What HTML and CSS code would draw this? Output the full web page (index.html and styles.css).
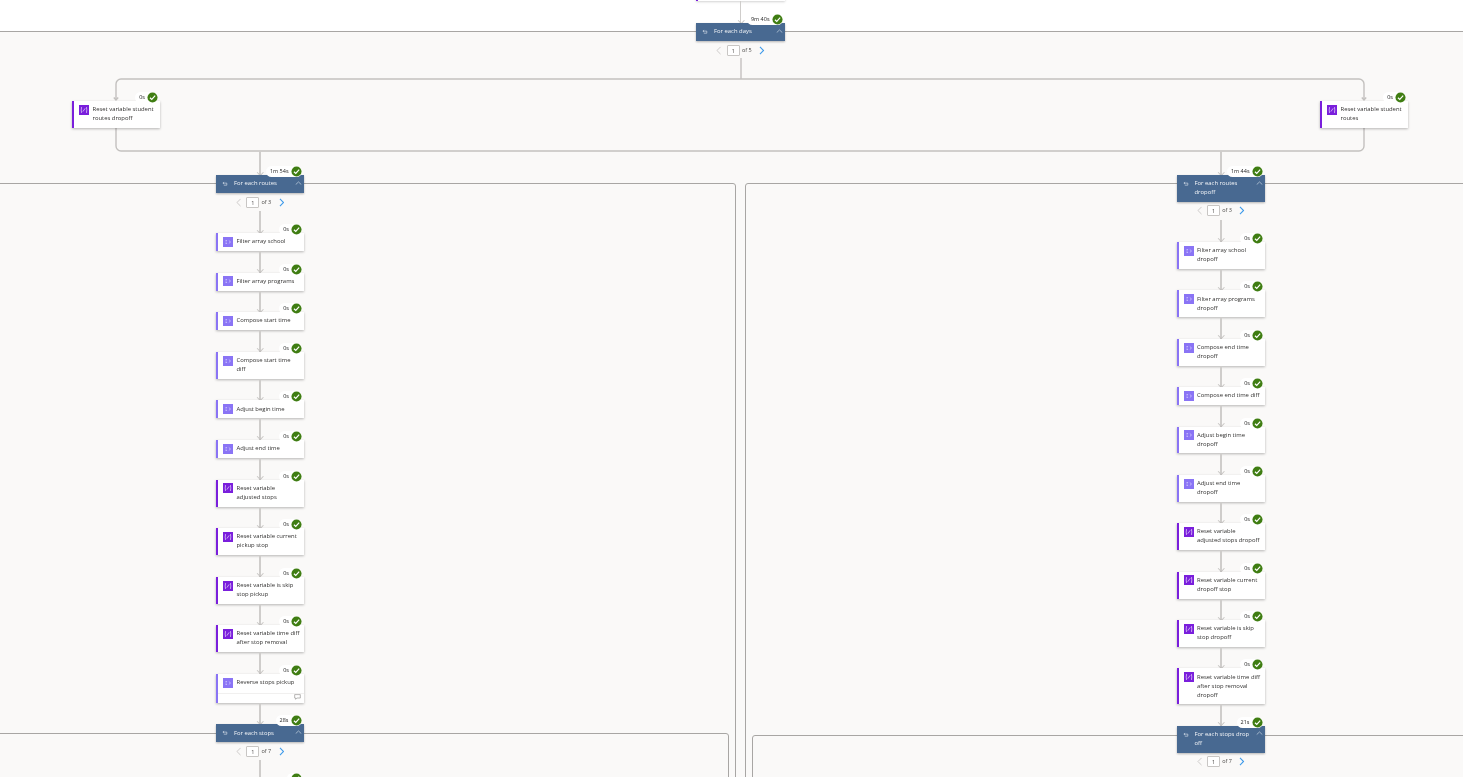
FILE: index.html
```html
<!DOCTYPE html>
<html lang="en">
<head>
<meta charset="utf-8">
<title>Flow run</title>
<link rel="stylesheet" href="styles.css">
</head>
<body>
<svg class="defs" width="0" height="0" aria-hidden="true">
  <symbol id="i-var" viewBox="0 0 10 10"><path d="M3 2.500H2.400v2l-.6.5.6.5v2H3M7 2.500h.6v2l.6.5-.6.5v2H7M3.900 6.600 6.100 3.400" fill="none" stroke="#fff" stroke-width=".6"/></symbol>
  <symbol id="i-data" viewBox="0 0 10 10"><path d="M2.500 3.500h1.600M2.500 5h1.200M2.500 6.500h1.600M5.800 3.500l1.700 1.500-1.700 1.500" fill="none" stroke="#e6e0ff" stroke-width=".6"/></symbol>
  <symbol id="i-loop" viewBox="0 0 10 10"><path d="M1.500 3.500h6.500v3.500H3M3.500 1.800 1.500 3.500l2 1.700" fill="none" stroke="#dfe6ee" stroke-width="1"/></symbol>
  <symbol id="i-ok" viewBox="0 0 12 12"><circle cx="6" cy="6" r="5.500" fill="#3f7d12"/><path d="M3.200 6.200 5.200 8 8.900 4" fill="none" stroke="#fff" stroke-width="1.300"/></symbol>
  <symbol id="i-up" viewBox="0 0 8 5"><path d="M.8 4 4 1l3.200 3" fill="none" stroke="#c9d5e3" stroke-width=".8"/></symbol>
  <symbol id="i-l" viewBox="0 0 6 10"><path d="M5 1 1 5l4 4" fill="none" stroke="#c8c6c4" stroke-width="1"/></symbol>
  <symbol id="i-r" viewBox="0 0 6 10"><path d="M1 1l4 4-4 4" fill="none" stroke="#3f9bea" stroke-width="1.200"/></symbol>
  <symbol id="i-note" viewBox="0 0 8 7"><path d="M.7.7h6.600v4H3.200L1.800 6.200V4.700H.7z" fill="none" stroke="#8a8886" stroke-width=".7"/></symbol>
</svg>

<main class="canvas">
  <div class="zone zone-outer"></div>
  <div class="zone zone-left"></div>
  <div class="zone zone-right"></div>
  <div class="zone zone-left-inner"></div>
  <div class="zone zone-right-inner"></div>

  <svg class="wires" width="1463" height="777" aria-hidden="true">
    <path d="M741 58V79"/>
    <path d="M1359 79H121a5 5 0 0 0-5 5V100"/>
    <path d="M1359 79a5 5 0 0 1 5 5V100"/>
    <path d="M116 128V146a5 5 0 0 0 5 5H1359a5 5 0 0 0 5-5V128"/>
    <path d="M113.800 97.500 116 100l2.200-2.500M1361.800 97.500 1364 100l2.200-2.500"/>
  </svg>

  <section class="col col-top">
    <div class="card card-var stub"></div>
    <div class="wire wire-22"></div>
    <div class="loop">
      <svg class="loop-ico"><use href="#i-loop"/></svg><span class="loop-text">For each days</span>
      <svg class="loop-up"><use href="#i-up"/></svg>
      <div class="badge badge-loop"><span>9m 40s</span><svg><use href="#i-ok"/></svg></div>
    </div>
    <div class="pager"><svg class="pg-l"><use href="#i-l"/></svg><span class="pg-box">1</span><span class="pg-of">of 5</span><svg class="pg-r"><use href="#i-r"/></svg></div>
  </section>

  <div class="card card-var branch-a">
    <svg class="ico ico-var"><use href="#i-var"/></svg><span class="label">Reset variable student routes dropoff</span>
    <div class="badge"><span>0s</span><svg><use href="#i-ok"/></svg></div>
  </div>
  <div class="card card-var branch-b">
    <svg class="ico ico-var"><use href="#i-var"/></svg><span class="label">Reset variable student routes</span>
    <div class="badge"><span>0s</span><svg><use href="#i-ok"/></svg></div>
  </div>

  <section class="col col-left">
    <div class="wire wire-24"></div>
    <div class="loop">
      <svg class="loop-ico"><use href="#i-loop"/></svg><span class="loop-text">For each routes</span>
      <svg class="loop-up"><use href="#i-up"/></svg>
      <div class="badge badge-loop"><span>1m 54s</span><svg><use href="#i-ok"/></svg></div>
    </div>
    <div class="pager"><svg class="pg-l"><use href="#i-l"/></svg><span class="pg-box">1</span><span class="pg-of">of 3</span><svg class="pg-r"><use href="#i-r"/></svg></div>
    <div class="wire wire-22"></div>
    <div class="card card-data"><svg class="ico ico-data"><use href="#i-data"/></svg><span class="label">Filter array school</span><div class="badge"><span>0s</span><svg><use href="#i-ok"/></svg></div></div>
    <div class="wire"></div>
    <div class="card card-data"><svg class="ico ico-data"><use href="#i-data"/></svg><span class="label">Filter array programs</span><div class="badge"><span>0s</span><svg><use href="#i-ok"/></svg></div></div>
    <div class="wire"></div>
    <div class="card card-data"><svg class="ico ico-data"><use href="#i-data"/></svg><span class="label">Compose start time</span><div class="badge"><span>0s</span><svg><use href="#i-ok"/></svg></div></div>
    <div class="wire"></div>
    <div class="card card-data"><svg class="ico ico-data"><use href="#i-data"/></svg><span class="label">Compose start time<br>diff</span><div class="badge"><span>0s</span><svg><use href="#i-ok"/></svg></div></div>
    <div class="wire"></div>
    <div class="card card-data"><svg class="ico ico-data"><use href="#i-data"/></svg><span class="label">Adjust begin time</span><div class="badge"><span>0s</span><svg><use href="#i-ok"/></svg></div></div>
    <div class="wire"></div>
    <div class="card card-data"><svg class="ico ico-data"><use href="#i-data"/></svg><span class="label">Adjust end time</span><div class="badge"><span>0s</span><svg><use href="#i-ok"/></svg></div></div>
    <div class="wire"></div>
    <div class="card card-var"><svg class="ico ico-var"><use href="#i-var"/></svg><span class="label">Reset variable<br>adjusted stops</span><div class="badge"><span>0s</span><svg><use href="#i-ok"/></svg></div></div>
    <div class="wire"></div>
    <div class="card card-var"><svg class="ico ico-var"><use href="#i-var"/></svg><span class="label">Reset variable current<br>pickup stop</span><div class="badge"><span>0s</span><svg><use href="#i-ok"/></svg></div></div>
    <div class="wire"></div>
    <div class="card card-var"><svg class="ico ico-var"><use href="#i-var"/></svg><span class="label">Reset variable is skip<br>stop pickup</span><div class="badge"><span>0s</span><svg><use href="#i-ok"/></svg></div></div>
    <div class="wire"></div>
    <div class="card card-var"><svg class="ico ico-var"><use href="#i-var"/></svg><span class="label">Reset variable time diff<br>after stop removal</span><div class="badge"><span>0s</span><svg><use href="#i-ok"/></svg></div></div>
    <div class="wire"></div>
    <div class="card card-data card-note"><svg class="ico ico-data"><use href="#i-data"/></svg><span class="label">Reverse stops pickup</span><svg class="note"><use href="#i-note"/></svg><div class="badge"><span>0s</span><svg><use href="#i-ok"/></svg></div></div>
    <div class="wire"></div>
    <div class="loop">
      <svg class="loop-ico"><use href="#i-loop"/></svg><span class="loop-text">For each stops</span>
      <svg class="loop-up"><use href="#i-up"/></svg>
      <div class="badge badge-loop"><span>28s</span><svg><use href="#i-ok"/></svg></div>
    </div>
    <div class="pager"><svg class="pg-l"><use href="#i-l"/></svg><span class="pg-box">1</span><span class="pg-of">of 7</span><svg class="pg-r"><use href="#i-r"/></svg></div>
    <div class="wire wire-22"></div>
    <div class="card card-var"><div class="badge"><svg><use href="#i-ok"/></svg></div></div>
  </section>

  <section class="col col-right">
    <div class="wire wire-24"></div>
    <div class="loop">
      <svg class="loop-ico"><use href="#i-loop"/></svg><span class="loop-text">For each routes<br>dropoff</span>
      <svg class="loop-up"><use href="#i-up"/></svg>
      <div class="badge badge-loop"><span>1m 44s</span><svg><use href="#i-ok"/></svg></div>
    </div>
    <div class="pager"><svg class="pg-l"><use href="#i-l"/></svg><span class="pg-box">1</span><span class="pg-of">of 3</span><svg class="pg-r"><use href="#i-r"/></svg></div>
    <div class="wire wire-22"></div>
    <div class="card card-data"><svg class="ico ico-data"><use href="#i-data"/></svg><span class="label">Filter array school<br>dropoff</span><div class="badge"><span>0s</span><svg><use href="#i-ok"/></svg></div></div>
    <div class="wire"></div>
    <div class="card card-data"><svg class="ico ico-data"><use href="#i-data"/></svg><span class="label">Filter array programs<br>dropoff</span><div class="badge"><span>0s</span><svg><use href="#i-ok"/></svg></div></div>
    <div class="wire"></div>
    <div class="card card-data"><svg class="ico ico-data"><use href="#i-data"/></svg><span class="label">Compose end time<br>dropoff</span><div class="badge"><span>0s</span><svg><use href="#i-ok"/></svg></div></div>
    <div class="wire"></div>
    <div class="card card-data"><svg class="ico ico-data"><use href="#i-data"/></svg><span class="label">Compose end time diff</span><div class="badge"><span>0s</span><svg><use href="#i-ok"/></svg></div></div>
    <div class="wire"></div>
    <div class="card card-data"><svg class="ico ico-data"><use href="#i-data"/></svg><span class="label">Adjust begin time<br>dropoff</span><div class="badge"><span>0s</span><svg><use href="#i-ok"/></svg></div></div>
    <div class="wire"></div>
    <div class="card card-data"><svg class="ico ico-data"><use href="#i-data"/></svg><span class="label">Adjust end time<br>dropoff</span><div class="badge"><span>0s</span><svg><use href="#i-ok"/></svg></div></div>
    <div class="wire"></div>
    <div class="card card-var"><svg class="ico ico-var"><use href="#i-var"/></svg><span class="label">Reset variable<br>adjusted stops dropoff</span><div class="badge"><span>0s</span><svg><use href="#i-ok"/></svg></div></div>
    <div class="wire"></div>
    <div class="card card-var"><svg class="ico ico-var"><use href="#i-var"/></svg><span class="label">Reset variable current<br>dropoff stop</span><div class="badge"><span>0s</span><svg><use href="#i-ok"/></svg></div></div>
    <div class="wire"></div>
    <div class="card card-var"><svg class="ico ico-var"><use href="#i-var"/></svg><span class="label">Reset variable is skip<br>stop dropoff</span><div class="badge"><span>0s</span><svg><use href="#i-ok"/></svg></div></div>
    <div class="wire"></div>
    <div class="card card-var"><svg class="ico ico-var"><use href="#i-var"/></svg><span class="label">Reset variable time diff<br>after stop removal<br>dropoff</span><div class="badge"><span>0s</span><svg><use href="#i-ok"/></svg></div></div>
    <div class="wire"></div>
    <div class="loop">
      <svg class="loop-ico"><use href="#i-loop"/></svg><span class="loop-text">For each stops drop<br>off</span>
      <svg class="loop-up"><use href="#i-up"/></svg>
      <div class="badge badge-loop"><span>21s</span><svg><use href="#i-ok"/></svg></div>
    </div>
    <div class="pager"><svg class="pg-l"><use href="#i-l"/></svg><span class="pg-box">1</span><span class="pg-of">of 7</span><svg class="pg-r"><use href="#i-r"/></svg></div>
  </section>
</main>
</body>
</html>
```
FILE: styles.css
```css
* { box-sizing: border-box; }
html, body { margin: 0; padding: 0; background: #fff; overflow: hidden; }
.defs { position: absolute; }

.canvas {
  position: relative;
  width: 1463px;
  height: 777px;
  overflow: hidden;
  font-family: "Open Sans", "Liberation Sans", sans-serif;
  font-size: 5.900px;
  line-height: 9px;
  color: #323130;
  filter: blur(.25px);
  will-change: transform;
}

/* Scope containers */
.zone { position: absolute; background: #faf9f8; border: 1px solid #a8a6a4; }
.zone-outer { left: -10px; right: -10px; top: 31px; bottom: -10px; }
.zone-left { left: -10px; width: 746px; top: 183px; bottom: -10px; border-radius: 0 3px 0 0; }
.zone-right { left: 745px; right: -10px; top: 183px; bottom: -10px; border-radius: 3px 0 0 0; }
.zone-left-inner { left: -10px; width: 739px; top: 733px; bottom: -10px; border-radius: 0 3px 0 0; }
.zone-right-inner { left: 752px; right: -10px; top: 735px; bottom: -10px; border-radius: 3px 0 0 0; }

.wires { position: absolute; left: 0; top: 0; fill: none; stroke: #c3c1bf; stroke-width: 1.400; }

/* Columns of steps */
.col { position: absolute; display: flex; flex-direction: column; }
.col-top { left: 696px; top: 0; width: 89px; }
.col-left { left: 216px; top: 151px; width: 88px; }
.col-right { left: 1176.500px; top: 151px; width: 88.500px; }

.wire { position: relative; height: 21.500px; flex: none; }
.col-left .wire { height: 21.600px; }
.col-right .wire { height: 21.400px; }
.wire::before {
  content: "";
  position: absolute;
  left: 50%;
  top: 0;
  bottom: 0;
  width: 1.600px;
  margin-left: -.8px;
  background: #cfcdcb;
}
.wire::after {
  content: "";
  position: absolute;
  left: 50%;
  bottom: 1px;
  width: 3.500px;
  height: 3.500px;
  margin-left: -1.750px;
  border-right: 1px solid #c8c6c4;
  border-bottom: 1px solid #c8c6c4;
  transform: rotate(45deg);
}
.col .wire-22 { height: 22px; }
.col .wire-24 { height: 24px; }

/* Action cards */
.card {
  position: relative;
  flex: none;
  display: flex;
  align-items: flex-start;
  gap: 3.500px;
  background: #fff;
  padding: 4.200px 3px 4.800px 5px;
  border-left: 2px solid #7a1fdc;
  box-shadow: 0 .5px 2.500px rgba(0, 0, 0, .28);
}
.card-data { border-left-color: #8a74f5; }
.card-var { border-left-color: #7a1fdc; }
.branch-a, .branch-b { position: absolute; top: 101px; width: 88px; }
.branch-a { left: 72px; }
.branch-b { left: 1320px; }
.stub { height: 2px; margin-top: -1px; padding: 0; }
.card-note { height: 29px; padding-bottom: 0; }
.card-note::after {
  content: "";
  position: absolute;
  left: 0;
  right: 0;
  bottom: 9px;
  border-top: 1px solid #f1f0ef;
}
.note { position: absolute; right: 3px; bottom: 3px; width: 7px; height: 6px; }

.ico { flex: none; width: 10px; height: 10px; margin: -.4px 0 -.6px; }
.ico-var { background: #7a1fdc; }
.ico-data { background: #8a74f5; }
.label { display: block; min-width: 0; }

/* Duration badge over a step */
.badge {
  position: absolute;
  top: -9px;
  right: 2px;
  display: flex;
  align-items: center;
  gap: 2px;
  height: 11px;
  border-radius: 6px;
  background: #fff;
  padding-left: 4px;
  font-size: 5.500px;
  line-height: 11px;
  color: #242424;
  white-space: nowrap;
}
.badge svg { width: 11px; height: 11px; flex: none; }
.badge-loop { right: 2.500px; }

/* Loop header */
.loop {
  position: relative;
  flex: none;
  display: flex;
  align-items: flex-start;
  background: #486991;
  color: #f3f5f8;
  padding: 4.200px 12px 4.800px 6px;
  box-shadow: 0 .5px 2px rgba(0, 0, 0, .28);
  min-height: 18px;
}
.loop-ico { flex: none; width: 6px; height: 6px; margin: 1.800px 6px 0 0; }
.loop-text { display: block; }
.loop-up { position: absolute; right: 2.500px; top: 5.500px; width: 7px; height: 4.500px; }

/* Pagination */
.pager {
  flex: none;
  height: 18px;
  display: flex;
  align-items: center;
  justify-content: center;
  gap: 2px;
  color: #484644;
  font-size: 5.500px;
}
.pg-l, .pg-r { flex: none; width: 5.500px; height: 9px; }
.pg-l { margin-right: 3px; }
.pg-r { margin-left: 5.500px; }
.pg-box {
  display: block;
  width: 13px;
  height: 11px;
  line-height: 10px;
  text-align: center;
  background: #fff;
  border: 1px solid #c8c6c4;
  border-radius: 1px;
}
```
